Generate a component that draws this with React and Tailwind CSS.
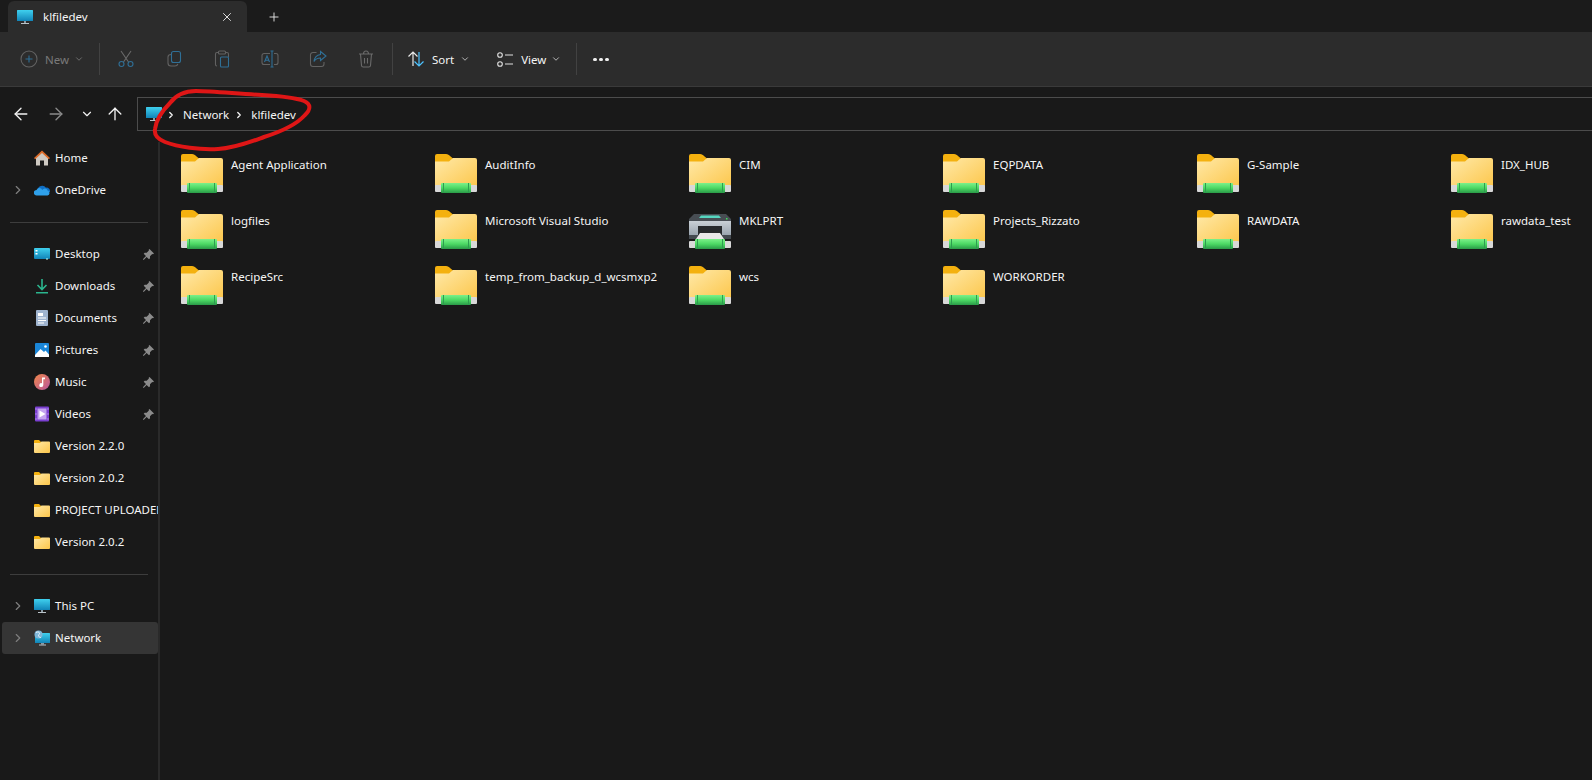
import { ArrowLeft, ArrowRight, ArrowUp, ChevronDown, ChevronRight, Plus, X } from "lucide-react";

const sidebarTop = [
  { name: "Home", icon: "home" },
  { name: "OneDrive", icon: "onedrive", expand: true },
];

const quickAccess = [
  { name: "Desktop", icon: "desktop", pin: true },
  { name: "Downloads", icon: "downloads", pin: true },
  { name: "Documents", icon: "documents", pin: true },
  { name: "Pictures", icon: "pictures", pin: true },
  { name: "Music", icon: "music", pin: true },
  { name: "Videos", icon: "videos", pin: true },
  { name: "Version 2.2.0", icon: "folder" },
  { name: "Version 2.0.2", icon: "folder" },
  { name: "PROJECT UPLOADED", icon: "folder" },
  { name: "Version 2.0.2", icon: "folder" },
];

const sidebarBottom = [
  { name: "This PC", icon: "monitor", expand: true },
  { name: "Network", icon: "network", expand: true, active: true },
];

const shares = [
  "Agent Application",
  "AuditInfo",
  "CIM",
  "EQPDATA",
  "G-Sample",
  "IDX_HUB",
  "logfiles",
  "Microsoft Visual Studio",
  "MKLPRT",
  "Projects_Rizzato",
  "RAWDATA",
  "rawdata_test",
  "RecipeSrc",
  "temp_from_backup_d_wcsmxp2",
  "wcs",
  "WORKORDER",
];

const Gradients = () => (
  <svg width="0" height="0" className="absolute">
    <defs>
      <linearGradient id="folderBody" x1="0" y1="0" x2="1" y2="1">
        <stop offset="0" stopColor="#ffe9a8" />
        <stop offset="1" stopColor="#fcc64a" />
      </linearGradient>
      <linearGradient id="screen" x1="0" y1="0" x2="0" y2="1">
        <stop offset="0" stopColor="#3fd0ee" />
        <stop offset="1" stopColor="#1184b8" />
      </linearGradient>
      <linearGradient id="musicBall" x1="0" y1="0" x2="1" y2="1">
        <stop offset="0" stopColor="#f0884a" />
        <stop offset="1" stopColor="#b8549c" />
      </linearGradient>
      <linearGradient id="greenBar" x1="0" y1="0" x2="0" y2="1">
        <stop offset="0" stopColor="#7cf08a" />
        <stop offset="0.5" stopColor="#4cd964" />
        <stop offset="1" stopColor="#2a9a48" />
      </linearGradient>
      <linearGradient id="printerBody" x1="0" y1="0" x2="0" y2="1">
        <stop offset="0" stopColor="#c9d0d6" />
        <stop offset="1" stopColor="#98a3ad" />
      </linearGradient>
    </defs>
  </svg>
);

const ShareBar = () => (
  <>
    <rect x="0" y="31" width="42" height="7" rx="1" fill="#d8d8d8" />
    <rect x="6" y="29" width="30" height="10" rx="1" fill="url(#greenBar)" />
    <rect x="8" y="29" width="1" height="10" fill="#2e9c50" />
    <rect x="33" y="29" width="1" height="10" fill="#2e9c50" />
  </>
);

const ShareFolder = () => (
  <svg width="42" height="39" viewBox="0 0 42 39">
    <path d="M0 2a2 2 0 0 1 2-2h9c2 0 3 1 4 2l3 2.500V8H0z" fill="#f4b10f" />
    <path d="M0 7.500h14l4-3.500h22a2 2 0 0 1 2 2v28H0z" fill="url(#folderBody)" />
    <ShareBar />
  </svg>
);

const SharePrinter = () => (
  <svg width="42" height="39" viewBox="0 0 42 39">
    <path d="M5 4h32l5 5v3H0V9z" fill="#474d53" />
    <path d="M12 5.500h18l2 2.500H10z" fill="#56d6c0" />
    <rect x="37" y="8" width="1.500" height="1.500" fill="#3ee05a" />
    <rect x="0" y="11" width="42" height="15" fill="url(#printerBody)" />
    <rect x="9" y="16" width="24" height="9" fill="#26292c" />
    <rect x="0" y="25" width="42" height="4" fill="#444a50" />
    <path d="M11 23h20l4 6H7z" fill="#e8e8e8" />
    <ShareBar />
  </svg>
);

const NavIcon = ({ type }) => {
  if (type === "folder") {
    return (
      <svg width="16" height="13" viewBox="0 0 16 13">
        <path d="M0 1a1 1 0 0 1 1-1h4l2 2v2H0z" fill="#f4b10f" />
        <path d="M0 3h6l1.500-1.500H15a1 1 0 0 1 1 1V12a1 1 0 0 1-1 1H1a1 1 0 0 1-1-1z" fill="url(#folderBody)" />
      </svg>
    );
  }
  if (type === "home") {
    return (
      <svg width="16" height="16" viewBox="0 0 16 16">
        <path d="M2 7l6-5 6 5v8.500H10v-5H6v5H2z" fill="#cfcac3" />
        <path d="M0 8L8 .5 16 8l-1.200 1.200L8 3 1.200 9.200z" fill="#dc6c2a" />
      </svg>
    );
  }
  if (type === "onedrive") {
    return (
      <svg width="16" height="16" viewBox="0 0 16 16">
        <path d="M3.500 8a4.700 4.700 0 0 1 8.500-2.300A3.300 3.300 0 0 1 16 9v1H3.500z" fill="#0f6fc6" />
        <path d="M2.800 13.500a2.800 2.800 0 0 1-.3-5.600A3.200 3.200 0 0 1 8.300 8a2.900 2.900 0 0 1 5.400.8A2.400 2.400 0 0 1 13.500 13.500z" fill="#2fa0ea" />
      </svg>
    );
  }
  if (type === "desktop") {
    return (
      <svg width="16" height="16" viewBox="0 0 16 16">
        <rect x="0" y="2" width="16" height="11" rx="1" fill="url(#screen)" />
        <rect x="1.500" y="4" width="2" height="1.500" fill="#fff" />
        <rect x="1.500" y="7" width="2" height="1.500" fill="#fff" />
        <rect x="12" y="12.500" width="2" height="1" fill="#cfe" />
      </svg>
    );
  }
  if (type === "downloads") {
    return (
      <svg width="16" height="16" viewBox="0 0 16 16">
        <path d="M8 1v10M3.500 7L8 11.500 12.500 7" fill="none" stroke="#2bb58e" strokeWidth="1.600" />
        <rect x="2" y="14" width="12" height="1.500" fill="#2bb58e" />
      </svg>
    );
  }
  if (type === "documents") {
    return (
      <svg width="16" height="16" viewBox="0 0 16 16">
        <rect x="2" y="0" width="12" height="16" rx="1" fill="#9fb4cf" />
        <rect x="4" y="3" width="5" height="3" fill="#fff" />
        <rect x="4" y="7.500" width="8" height="1" fill="#fff" />
        <rect x="4" y="10" width="8" height="1" fill="#fff" />
        <rect x="4" y="12.500" width="6" height="1" fill="#fff" />
      </svg>
    );
  }
  if (type === "pictures") {
    return (
      <svg width="16" height="16" viewBox="0 0 16 16">
        <rect x="1" y="1" width="14" height="14" rx="1" fill="#1a86d8" />
        <path d="M1 13l5.500-6L10 10l1.500-1.500L15 12.500V15H1z" fill="#fff" />
        <circle cx="11.500" cy="4.500" r="1.300" fill="#fff" />
      </svg>
    );
  }
  if (type === "music") {
    return (
      <svg width="16" height="16" viewBox="0 0 16 16">
        <circle cx="8" cy="8" r="8" fill="url(#musicBall)" />
        <path d="M8 3.500h3v1.800H9.300V11a2 2 0 1 1-1.300-1.800z" fill="#fff" />
      </svg>
    );
  }
  if (type === "videos") {
    return (
      <svg width="16" height="16" viewBox="0 0 16 16">
        <rect x="1" y="0.500" width="14" height="15" rx="1" fill="#7a3fd0" />
        <rect x="3.500" y="2.500" width="9" height="11" fill="#c4a3f0" />
        <path d="M5.500 4.500L11.500 8l-6 3.500z" fill="#fff" />
        <rect x="1.500" y="2.500" width="1" height="1" fill="#e3d4fa" />
        <rect x="1.500" y="7.500" width="1" height="1" fill="#e3d4fa" />
        <rect x="1.500" y="12.500" width="1" height="1" fill="#e3d4fa" />
        <rect x="13.500" y="2.500" width="1" height="1" fill="#e3d4fa" />
        <rect x="13.500" y="7.500" width="1" height="1" fill="#e3d4fa" />
        <rect x="13.500" y="12.500" width="1" height="1" fill="#e3d4fa" />
      </svg>
    );
  }
  if (type === "network") {
    return (
      <svg width="16" height="16" viewBox="0 0 16 16">
        <rect x="1" y="3" width="15" height="10" rx="0.500" fill="url(#screen)" />
        <rect x="7" y="13" width="3" height="1.500" fill="#8a9aa4" />
        <rect x="5" y="14.500" width="7" height="1" fill="#b9c2c8" />
        <circle cx="4.500" cy="4.500" r="4" fill="#7fb6d8" />
        <path d="M2 2.500c2-1 3-.5 3.500.5S4 5 4.500 6 6 7.500 7 7.500" fill="none" stroke="#eaf4fa" strokeWidth="1" />
      </svg>
    );
  }
  return (
    <svg width="16" height="16" viewBox="0 0 16 16">
      <rect x="0" y="1" width="16" height="11" rx="0.500" fill="url(#screen)" />
      <rect x="7" y="12" width="2" height="2" fill="#8a9aa4" />
      <rect x="4" y="14" width="8" height="1" fill="#b9c2c8" />
    </svg>
  );
};

const PinIcon = () => (
  <svg width="11" height="11" viewBox="0 0 11 11" fill="#8b8b8b">
    <path d="M6.500 0L11 4.500l-1 .8-.8-.2-2.200 2.200v2L6 10.300 3.600 7.900.9 10.700 0 10.800l.1-.9L3 7.100.7 4.800l1-1h2L5.900 1.600l-.2-.8z" />
  </svg>
);

const SidebarRow = ({ item }) => (
  <div
    className={`relative flex h-8 shrink-0 items-center whitespace-nowrap rounded-[3px] pl-[32px] ${
      item.active ? "bg-[#353535]" : ""
    }`}
  >
    {item.expand && (
      <ChevronRight size={14} strokeWidth={2} className="absolute left-[9px] text-[#7e7e7e]" />
    )}
    <span className="flex w-[21px] shrink-0 items-center">
      <NavIcon type={item.icon} />
    </span>
    <span className="text-[11.5px] text-[#f5f5f5]">{item.name}</span>
    {item.pin && (
      <span className="absolute left-[141px] flex">
        <PinIcon />
      </span>
    )}
  </div>
);

const Sidebar = () => (
  <aside className="flex w-[160px] shrink-0 flex-col overflow-hidden border-r-2 border-[#2a2a2a] pl-[2px]">
    {sidebarTop.map((item) => (
      <SidebarRow key={item.name} item={item} />
    ))}
    <div className="mb-[15px] ml-[8px] mr-[10px] mt-[16px] h-px shrink-0 bg-[#3d3d3d]" />
    {quickAccess.map((item, i) => (
      <SidebarRow key={i} item={item} />
    ))}
    <div className="mb-[15px] ml-[8px] mr-[10px] mt-[16px] h-px shrink-0 bg-[#3d3d3d]" />
    {sidebarBottom.map((item) => (
      <SidebarRow key={item.name} item={item} />
    ))}
  </aside>
);

const ToolIcon = ({ children }) => (
  <button className="flex h-full w-12 items-center justify-center">
    <svg width="18" height="18" viewBox="0 0 18 18" fill="none" strokeWidth="1.100">
      {children}
    </svg>
  </button>
);

const Toolbar = () => (
  <div className="flex h-[54px] shrink-0 items-center bg-[#2c2c2c] pl-[20px]">
    <button className="flex w-[76px] items-center">
      <svg width="18" height="18" viewBox="0 0 18 18" fill="none" strokeWidth="1.100">
        <circle cx="9" cy="9" r="8" stroke="#626262" />
        <path d="M9 5.500v7M5.500 9h7" stroke="#2f6f96" />
      </svg>
      <span className="ml-[7px] mt-[1px] text-[11.5px] text-[#7a7a7a]">New</span>
      <ChevronDown size={10} className="ml-[5px] text-[#7a7a7a]" />
    </button>
    <div className="ml-[3px] mr-[2px] h-8 w-px shrink-0 bg-[#424242]" />
    <ToolIcon>
      <path d="M4 1l7.500 11M14 1L6.500 12" stroke="#6a6a6a" />
      <circle cx="4.500" cy="14" r="2.500" stroke="#2f6f96" />
      <circle cx="13.500" cy="14" r="2.500" stroke="#2f6f96" />
    </ToolIcon>
    <ToolIcon>
      <rect x="6.500" y="1.500" width="9" height="11" rx="2" stroke="#2f6f96" />
      <path d="M6 4.500c-2 0-3 .7-3 2.500v6c0 2 1 3 3 3h4c1.500 0 2.500-.8 2.800-2" stroke="#626262" />
    </ToolIcon>
    <ToolIcon>
      <path d="M4 16c-1 0-1.500-.6-1.500-1.500V4c0-1 .5-1.500 1.500-1.500h1.500M12.500 2.500H14c1 0 1.500.5 1.500 1.500v3" stroke="#626262" />
      <rect x="5.500" y="1" width="7" height="3" rx="1" stroke="#626262" />
      <rect x="7.500" y="7" width="8" height="10" rx="1" stroke="#2f6f96" />
    </ToolIcon>
    <ToolIcon>
      <path d="M9 3.500H3a2 2 0 0 0-2 2v7a2 2 0 0 0 2 2h6" stroke="#626262" />
      <path d="M13 3.500h2a2 2 0 0 1 2 2v7a2 2 0 0 1-2 2h-2" stroke="#626262" />
      <path d="M11 1v16M9.500 1h3M9.500 17h3" stroke="#2f6f96" />
      <path d="M3.500 12L6 6l2.500 6M4.300 10.300h3.400" stroke="#2f6f96" />
    </ToolIcon>
    <ToolIcon>
      <path d="M7.500 2.500H4a2.500 2.500 0 0 0-2.500 2.500v9A2.500 2.500 0 0 0 4 16.500h8.500A2.500 2.500 0 0 0 15 14v-2" stroke="#626262" />
      <path d="M11.500 1.500l5.500 4.500-5.500 4.500V8c-3 0-5 1-6.500 3.500C5.500 7.500 8 5 11.500 4.500z" stroke="#2f6f96" />
    </ToolIcon>
    <ToolIcon>
      <path d="M2 4h14M6.500 4c0-2 1-3 2.500-3s2.500 1 2.500 3M3.500 4l1 11.500c.1 1 .8 1.500 1.700 1.500h5.600c.9 0 1.600-.5 1.700-1.500l1-11.500M7.500 8v5.500M10.500 8v5.500" stroke="#6a6a6a" />
    </ToolIcon>
    <div className="ml-[2px] mr-[3px] h-8 w-px shrink-0 bg-[#424242]" />
    <button className="ml-[11px] flex items-center">
      <svg width="18" height="18" viewBox="0 0 18 18" fill="none" strokeWidth="1.200">
        <path d="M6 16V2M1.500 6.500L6 2l4.500 4.500" stroke="#e8e8e8" />
        <path d="M12 2v14M7.500 11.500L12 16l4.500-4.500" stroke="#4cc2ff" />
      </svg>
      <span className="ml-[7px] mt-[1px] text-[11.5px] text-[#f5f5f5]">Sort</span>
      <ChevronDown size={10} className="ml-[6px] text-[#d0d0d0]" />
    </button>
    <button className="ml-[27px] flex items-center">
      <svg width="17" height="15" viewBox="0 0 17 15" fill="none" strokeWidth="1.100" stroke="#e0e0e0">
        <circle cx="3" cy="3" r="2.300" />
        <circle cx="3" cy="12" r="2.300" />
        <path d="M8 3h8M8 12h8" />
      </svg>
      <span className="ml-[7px] mt-[1px] text-[11.5px] text-[#f5f5f5]">View</span>
      <ChevronDown size={10} className="ml-[5px] text-[#d0d0d0]" />
    </button>
    <div className="ml-[15px] h-8 w-px shrink-0 bg-[#424242]" />
    <div className="ml-[16px] flex gap-[2px]">
      <span className="h-[3px] w-[4px] rounded-full bg-[#f0f0f0]" />
      <span className="h-[3px] w-[4px] rounded-full bg-[#f0f0f0]" />
      <span className="h-[3px] w-[4px] rounded-full bg-[#f0f0f0]" />
    </div>
  </div>
);

const AddressBar = () => (
  <div className="flex h-[56px] shrink-0 items-start border-t border-[#3a3a3a] pt-[10px]">
    <div className="flex h-[34px] w-[137px] shrink-0 items-center text-[#f2f2f2]">
      <ArrowLeft size={20} strokeWidth={1.600} className="ml-[11px]" />
      <ArrowRight size={20} strokeWidth={1.600} className="ml-[15px] text-[#8a8a8a]" />
      <ChevronDown size={14} strokeWidth={2} className="ml-[14px]" />
      <ArrowUp size={20} strokeWidth={1.600} className="ml-[11px]" />
    </div>
    <div className="flex h-[34px] flex-1 items-center border border-r-0 border-[#4c4c4c] pl-[8px] text-[11.5px] text-[#f5f5f5]">
      <NavIcon type="monitor" />
      <ChevronRight size={10} strokeWidth={3} className="ml-[4px] mt-[1px]" />
      <span className="ml-[7px] mt-[1px]">Network</span>
      <ChevronRight size={10} strokeWidth={3} className="ml-[5px] mt-[1px]" />
      <span className="ml-[7px] mt-[1px]">klfiledev</span>
    </div>
  </div>
);

const Annotation = () => (
  <svg className="pointer-events-none absolute left-0 top-0" width="340" height="160" fill="none">
    <path
      d="M170 103C176 95 184 91 196 91C212 91 240 94 262 95C280 96 296 98 304 101C311 104 311 109 305 115C297 124 280 132 264 137C250 142 235 148 218 149C200 150 178 147 165 142C157 139 154 135 155 129C156 120 163 110 170 103Z"
      stroke="#df1616"
      strokeWidth="4"
      strokeLinecap="round"
    />
  </svg>
);

export default function App() {
  return (
    <div className="relative flex h-[780px] w-[1592px] flex-col overflow-hidden bg-[#191919] font-['Noto_Sans',sans-serif]">
      <Gradients />
      <div className="flex h-8 shrink-0 items-end bg-[#1b1b1b] pl-[8px]">
        <div className="flex h-[31px] w-[239px] items-center rounded-t-[6px] bg-[#2c2c2c] pl-[9px] text-[11.5px] text-[#f5f5f5]">
          <NavIcon type="monitor" />
          <span className="ml-[10px] flex-1">klfiledev</span>
          <X size={14} strokeWidth={1.500} className="mr-[13px]" />
        </div>
        <Plus size={14} strokeWidth={1.500} className="mb-[8px] ml-[20px] text-[#f0f0f0]" />
      </div>
      <Toolbar />
      <AddressBar />
      <div className="flex min-h-0 flex-1">
        <Sidebar />
        <main className="grid flex-1 auto-rows-[56px] grid-cols-[repeat(6,254px)] content-start pl-[21px] pt-[12px]">
          {shares.map((name) => (
            <div key={name} className="flex">
              {name === "MKLPRT" ? <SharePrinter /> : <ShareFolder />}
              <span className="ml-[8px] whitespace-nowrap pt-[2px] text-[11.5px] leading-[18px] text-[#f5f5f5]">{name}</span>
            </div>
          ))}
        </main>
      </div>
      <Annotation />
    </div>
  );
}
